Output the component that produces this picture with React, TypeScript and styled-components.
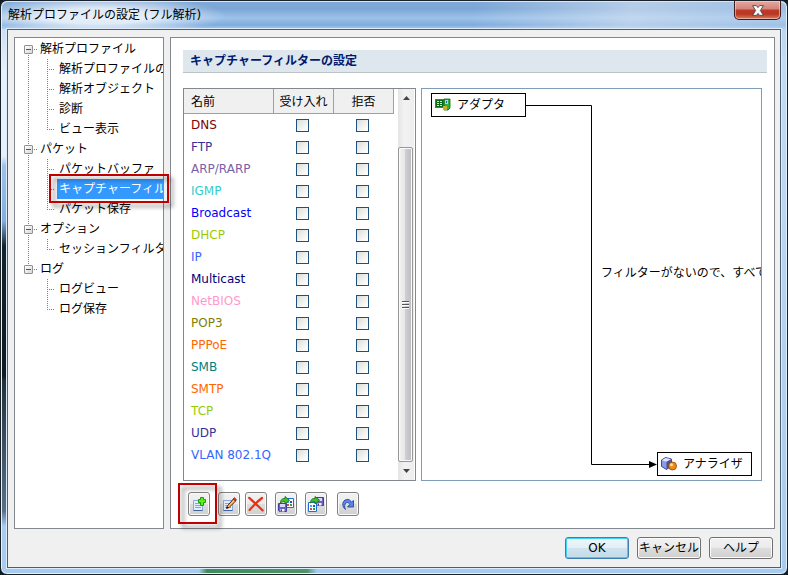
import React, { useState } from "react";
import styled, { createGlobalStyle, css } from "styled-components";

const GlobalStyle = createGlobalStyle`
  *, *::before, *::after { box-sizing: border-box; }
  body {
    margin: 0;
    background: #101c22;
    color: #000;
    font-family: "DejaVu Sans", "Noto Sans CJK JP", sans-serif;
    font-size: 12px;
    line-height: 20px;
  }
  button, input { font: inherit; color: inherit; margin: 0; padding: 0; }
  ul { list-style: none; margin: 0; padding: 0; }
`;

/* ---------- window frame ---------- */

const Window = styled.div`
  min-height: 100vh;
  display: flex;
  flex-direction: column;
  padding: 0 6px 6px;
  border: 1px solid #1a2128;
  border-radius: 7px;
  box-shadow: inset 0 0 0 1px #e4f1fc;
  background:
    linear-gradient(90deg, transparent 198px, #3f8a5c 206px, #4f9468 306px, transparent 316px) 0 100% / 100% 6px no-repeat,
    linear-gradient(180deg, #b9d3ee 0, #e6f1fb 70px, #e6f1fb 155px, #9cc2ea 165px, #83aede 220px, #14242c 245px, #0e1b1f 375px, #22323b 380px, #5a7088 510px, #a9cbed 525px) 0 0 / 6px 100% no-repeat,
    linear-gradient(180deg, #b7cfe9 0, #c3dcf5 60px, #b4d3f2 300px, #a7cbef 100%);
`;

const TitleBar = styled.header`
  display: flex;
  align-items: flex-start;
  justify-content: space-between;
  height: 28px;
  margin: 0 -5px;
  padding: 0 5px 0 2px;
  border-radius: 6px 6px 0 0;
  box-shadow: inset 0 1px 0 #d6e8f8;
  background:
    radial-gradient(ellipse 130px 20px at 95px 15px, rgba(255, 255, 255, 0.75) 40%, transparent 100%),
    linear-gradient(100deg, transparent 60%, rgba(218, 230, 243, 0.6) 80%, rgba(190, 214, 240, 0.5) 100%),
    linear-gradient(180deg, #7fa9d8 0, #7ba6d6 8px, #8bb3df 12px, #9cc2ea 17px, #7fabdc 24px, #a8cbef 28px);
`;

const Title = styled.h1`
  margin: 4px 0 0 4px;
  font-size: 12px;
  font-weight: 400;
  line-height: 20px;
  white-space: nowrap;
`;

const CloseButton = styled.button`
  display: grid;
  place-items: center;
  width: 47px;
  height: 19px;
  border: 1px solid #451b22;
  border-top: 0;
  border-radius: 0 0 5px 5px;
  box-shadow: inset 0 0 0 1px rgba(255, 220, 210, 0.55);
  background: linear-gradient(180deg, #e6a9a0 0, #d48379 8px, #bd3c28 9px, #b93622 13px, #d87e62 100%);
`;

const Client = styled.main`
  flex: 1;
  display: flex;
  flex-direction: column;
  border: 1px solid #4c5f6e;
  box-shadow: 0 0 0 1px #dcecfa;
  background: #f0f0f0;
`;

const Panels = styled.div`
  flex: 1;
  display: flex;
  gap: 6px;
  padding: 7px 5px 0 6px;
`;

const Footer = styled.footer`
  display: flex;
  justify-content: flex-end;
  gap: 8px;
  padding: 8px 7px;
`;

const DialogButton = styled.button<{ $primary?: boolean }>`
  width: 64px;
  height: 22px;
  line-height: 18px;
  white-space: nowrap;
  border: 1px solid #707070;
  border-radius: 3px;
  box-shadow: inset 0 0 0 1px #fbfbfb;
  background: linear-gradient(180deg, #f2f2f2 0, #ebebeb 48%, #dddddd 52%, #cfcfcf 100%);
  ${(p) =>
    p.$primary &&
    css`
      border-color: #3c7fb1;
      box-shadow: inset 0 0 0 1px #3fd0f8;
      background: linear-gradient(180deg, #eef6fa 0, #e2f0f7 48%, #cfe3ee 52%, #c3dbe8 100%);
    `}
`;

/* ---------- emphasis frame ---------- */

const Callout = styled.span<{ $inset: string }>`
  position: absolute;
  z-index: 2;
  inset: ${(p) => p.$inset};
  border: 2px solid #c00000;
  filter: drop-shadow(4px 4px 2px rgba(0, 0, 0, 0.45));
  pointer-events: none;
`;

/* ---------- tree ---------- */

const TreePanel = styled.nav`
  flex: none;
  width: 150px;
  padding-top: 1px;
  border: 1px solid #828790;
  background: #fff;
`;

const TreeRow = styled.div`
  position: relative;
  display: flex;
  height: 20px;
`;

const vDots = "repeating-linear-gradient(180deg, #808080 0 1px, transparent 1px 2px)";
const hDots = "repeating-linear-gradient(90deg, #808080 0 1px, transparent 1px 2px)";

const RootGuide = styled.span<{ $line: "first" | "through" | "last" | "none" }>`
  flex: none;
  display: flex;
  align-items: center;
  width: 23px;
  padding-left: 9px;
  background-repeat: no-repeat;
  ${(p) =>
    p.$line !== "none" &&
    css`
      background-image: ${vDots};
      background-size: 1px ${p.$line === "through" ? "100%" : "50%"};
      background-position: 13px ${p.$line === "first" ? "100%" : "0"};
    `}
`;

const ChildGuide = styled.span<{ $last: boolean }>`
  flex: none;
  width: 19px;
  background-repeat: no-repeat;
  background-image: ${vDots}, ${hDots};
  background-size: 1px ${(p) => (p.$last ? "50%" : "100%")}, 8px 1px;
  background-position: 9px 0, 9px 10px;
`;

const Dash = styled.span`
  width: 4px;
  height: 1px;
  margin-left: 1px;
  background: ${hDots};
`;

const Expander = styled.button`
  display: grid;
  place-items: center;
  width: 9px;
  height: 9px;
  border: 1px solid #919191;
  border-radius: 1px;
  background: linear-gradient(135deg, #fff, #d8d8d8);
  &::before {
    content: "";
    width: 5px;
    height: 1px;
    background: #3b55a0;
  }
`;

const TreeLabel = styled.a<{ $selected?: boolean }>`
  flex: 0 1 auto;
  min-width: 0;
  padding: 0 2px;
  overflow: hidden;
  white-space: nowrap;
  color: #000;
  text-decoration: none;
  ${(p) =>
    p.$selected &&
    css`
      color: #fff;
      background: #3399ff;
    `}
`;

/* ---------- settings panel ---------- */

const Settings = styled.section`
  flex: 1;
  min-width: 0;
  display: flex;
  flex-direction: column;
  padding: 12px 7px 12px 12px;
  border: 1px solid #828790;
  background: #fff;
`;

const SectionTitle = styled.h2`
  margin: 0 0 15px;
  padding: 0 7px;
  height: 23px;
  line-height: 22px;
  font-size: 12px;
  font-weight: 700;
  color: #001a6e;
  border-bottom: 1px solid #bcc3c7;
  background: #dde7ed;
`;

const Workspace = styled.div`
  flex: 1;
  display: flex;
  gap: 5px;
  padding-right: 5px;
`;

const ListBox = styled.div`
  flex: none;
  display: flex;
  justify-content: space-between;
  width: 233px;
  border: 1px solid #828790;
  padding-right: 1px;
`;

const FilterTable = styled.table`
  align-self: flex-start;
  width: 210px;
  table-layout: fixed;
  border-collapse: separate;
  border-spacing: 0;
`;

const HeadCell = styled.th<{ $wide?: boolean }>`
  width: ${(p) => (p.$wide ? "90px" : "60px")};
  height: 25px;
  padding: 2px 0 0 ${(p) => (p.$wide ? "7px" : "0")};
  font-weight: 400;
  white-space: nowrap;
  text-align: ${(p) => (p.$wide ? "left" : "center")};
  border-right: 1px solid #a0a0a0;
  border-bottom: 1px solid #a0a0a0;
  background: #f0f0f0;
`;

const NameCell = styled.th<{ $color: string }>`
  height: 22px;
  padding: 0 0 0 7px;
  font-weight: 400;
  text-align: left;
  white-space: nowrap;
  color: ${(p) => p.$color};
`;

const CheckCell = styled.td`
  height: 22px;
  padding: 0 3px 0 0;
  line-height: 0;
  text-align: center;
`;

const CheckBox = styled.input`
  appearance: none;
  width: 13px;
  height: 13px;
  border: 1px solid #1c5180;
  background: linear-gradient(135deg, #dcdcd7, #f8f8f6 70%, #fff);
  &:checked {
    background: #21a121;
    box-shadow: inset 0 0 0 2px #fff;
  }
`;

const ScrollBar = styled.div`
  display: flex;
  flex-direction: column;
  width: 16px;
  background: linear-gradient(90deg, #e4e4e4, #f2f2f2 40%, #eeeeee);
`;

const ScrollArrow = styled.button`
  display: grid;
  place-items: center;
  height: 18px;
  border: 0;
  background: none;
`;

const ScrollTrack = styled.div`
  flex: 1;
  display: flex;
  flex-direction: column;
  padding-top: 40px;
`;

const ScrollThumb = styled.div`
  flex: 1;
  display: grid;
  place-items: center;
  margin-right: 1px;
  border: 1px solid #979797;
  border-radius: 2px;
  box-shadow: inset 0 0 0 1px #fafafa;
  background: linear-gradient(90deg, #f4f4f4, #e6e6e8 45%, #cfcfd3 50%, #bcbcc0);
`;

/* ---------- diagram ---------- */

const Canvas = styled.div`
  position: relative;
  flex: 1;
  min-width: 0;
  overflow: hidden;
  border: 1px solid #7f9db9;
`;

const Wires = styled.svg`
  position: absolute;
  left: 0;
  top: 0;
`;

const Node = styled.div<{ $x: number; $y: number }>`
  position: absolute;
  left: ${(p) => p.$x}px;
  top: ${(p) => p.$y}px;
  display: flex;
  align-items: center;
  gap: 6px;
  width: 95px;
  height: 24px;
  padding-left: 3px;
  border: 1px solid #000;
  background: #fff;
  white-space: nowrap;
`;

const CanvasNote = styled.p`
  position: absolute;
  left: 179px;
  top: 174px;
  margin: 0;
  white-space: nowrap;
`;

/* ---------- toolbar ---------- */

const Toolbar = styled.div`
  display: flex;
  gap: 8px;
  margin-top: 11px;
  padding-left: 5px;
`;

const ToolGroup = styled.div<{ $gap: number }>`
  display: flex;
  gap: ${(p) => p.$gap}px;
`;

const ToolButton = styled.button`
  position: relative;
  display: grid;
  place-items: center;
  width: 22px;
  height: 24px;
  border: 1px solid #808080;
  border-radius: 3px;
  box-shadow: inset 0 0 0 1px #fafafa;
  background: linear-gradient(180deg, #f2f2f2 0, #ebebeb 48%, #dddddd 52%, #d0d0d0 100%);
`;

/* ---------- icons ---------- */

const Icon = ({ children }: { children: React.ReactNode }) => (
  <svg width="16" height="16" viewBox="0 0 16 16" aria-hidden="true">
    {children}
  </svg>
);

const Sheet = () => (
  <>
    <path d="M2.5 4.5h9v10h-9z" fill="#e3efff" stroke="#8aa9dc" />
    <path d="M2.5 14.5h9" stroke="#3e62a8" />
    <path d="M4 7.5h6M4 9.5h6M4 11.5h6" stroke="#7fa3e4" />
  </>
);

const AddIcon = () => (
  <Icon>
    <Sheet />
    <path d="M9.5 1.5h3v2h2v3h-2v3h-3v-3h-2v-3h2z" fill="#5cf016" stroke="#1c9a10" />
  </Icon>
);

const EditIcon = () => (
  <Icon>
    <Sheet />
    <path d="M6.2 10.2 12.8 2.6 15 4.6 8 11.6 5.6 12.4z" fill="#ffc26a" stroke="#4b1b0c" />
    <path d="M12 3.2 13.4 1.6 15.4 3.4 14.2 5z" fill="#e23a22" stroke="#7c1408" strokeWidth=".6" />
    <path d="M5.4 12.6 6.2 10.4 7.6 11.8z" fill="#111" />
  </Icon>
);

const DeleteIcon = () => (
  <Icon>
    <path d="M1.2 1.8C5 5 10 10 14.6 14.4M14 2C10 5 5 10 1.6 14" fill="none" stroke="#e63312" strokeWidth="2.2" strokeLinecap="round" />
  </Icon>
);

const Disk = ({ x, y }: { x: number; y: number }) => (
  <g transform={`translate(${x} ${y})`}>
    <path d="M.5.5h8v8h-7l-1-1z" fill="#6a63c4" stroke="#453c9c" />
    <path d="M2 1h5v3H2z" fill="#d9d7f4" />
    <path d="M2.5 6h4v2.5h-4z" fill="#f4f4ff" />
    <path d="M3 6.5h1v2H3z" fill="#3a348c" />
  </g>
);

const Grid = ({ x, y }: { x: number; y: number }) => (
  <g transform={`translate(${x} ${y})`}>
    <path d="M.5.5h8v9h-8z" fill="#fff" stroke="#1f6fd8" />
    <path d="M2 3h2v2H2z" fill="#42a5f5" />
    <path d="M5 3h2v2H5z" fill="#1e4fc0" />
    <path d="M2 6h2v2H2z" fill="#e6482a" />
    <path d="M5 6h2v2H5z" fill="#28a53a" />
  </g>
);

const TransferArrow = () => (
  <path d="M2.5 7C2.500 3.500 4.500 2.300 7 2.500V.5l4.500 3.800L7 8V5.700C5 5.500 3.800 6 2.500 7z" fill="#47c02c" stroke="#17701a" strokeWidth=".9" />
);

const ImportIcon = () => (
  <Icon>
    <Grid x={7} y={2} />
    <Disk x={0} y={7} />
    <TransferArrow />
  </Icon>
);

const ExportIcon = () => (
  <Icon>
    <Disk x={7} y={1} />
    <Grid x={0} y={6} />
    <TransferArrow />
  </Icon>
);

const ResetIcon = () => (
  <Icon>
    <path d="M5.500 13.500C1.500 10.500 2 4.500 6.500 3.500 9 3 10.600 4.200 11.400 6.200L13.500 4.500V11H7.500L9.600 8.600C9 6.600 7.600 6 6.200 6.800 4.400 8 4.200 11 5.500 13.500z" fill="#5b86e8" stroke="#27469f" strokeWidth=".9" />
  </Icon>
);

const AdapterIcon = () => (
  <Icon>
    <path d="M0 2h12v9H0z" fill="#1f9a2a" />
    <path d="M1 3h7v7H1z" fill="#0c6b18" />
    <path d="M2 4h2v1H2zM5 4h2v1H5zM2 6h2v1H2zM5 6h2v1H5zM2 8h2v1H2zM5 8h2v1H5z" fill="#c8f7b4" />
    <path d="M9 2h6v9l-2 2H9z" fill="#2db53a" stroke="#0b5e14" strokeWidth=".8" />
    <path d="M10 3h3v4h-3z" fill="#a9d4ff" />
    <path d="M11 4h1v2h-1z" fill="#2a62b8" />
    <path d="M8 9h4v4H8z" fill="#f4d935" />
    <path d="M9 9v4M11 9v4" stroke="#7a6a00" strokeWidth=".7" />
  </Icon>
);

const AnalyzerIcon = () => (
  <Icon>
    <path d="M.5 4 4.500 1.500 10.500 3V10L5.500 13.500.5 10.500z" fill="#8c9ae0" stroke="#323c88" strokeWidth=".9" />
    <path d="M.9 4.200 4.600 2 10 3.200 5.600 5.800z" fill="#dfe5ff" />
    <path d="M5.500 5.800 10.500 3.200V10L5.500 13.400z" fill="#4450a8" />
    <circle cx="11.500" cy="10" r="4" fill="#f08a12" stroke="#8d4406" strokeWidth=".8" />
    <circle cx="10.500" cy="8.800" r="1.500" fill="#ffe2a8" />
  </Icon>
);

const CloseGlyph = () => (
  <svg width="12" height="11" viewBox="0 0 12 11" aria-hidden="true">
    <path d="M.6 .6h3.800L6 2.600 7.600 .6h3.800L8.400 5.500l3 4.900H7.600L6 8.400l-1.600 2H.6l3-4.900z" fill="#fafafa" stroke="#4a4550" strokeWidth=".9" />
  </svg>
);

const Arrow = ({ down }: { down?: boolean }) => (
  <svg width="7" height="4" viewBox="0 0 7 4" aria-hidden="true">
    <path d={down ? "M0 0h7L3.500 4z" : "M0 4h7L3.500 0z"} fill="#444" />
  </svg>
);

const Grip = () => (
  <svg width="8" height="8" viewBox="0 0 8 8" aria-hidden="true">
    <path d="M0 .5h7M0 3.500h7M0 6.500h7" stroke="#555" />
    <path d="M0 1.500h7M0 4.500h7M0 7.500h7" stroke="#fff" />
  </svg>
);

/* ---------- data ---------- */

const tree = [
  { label: "解析プロファイル", children: ["解析プロファイルの設定", "解析オブジェクト", "診断", "ビュー表示"] },
  { label: "パケット", children: ["パケットバッファ", "キャプチャーフィルター", "パケット保存"] },
  { label: "オプション", children: ["セッションフィルター"] },
  { label: "ログ", children: ["ログビュー", "ログ保存"] },
];

const selectedItem = "キャプチャーフィルター";

const filters: [string, string][] = [
  ["DNS", "#800000"],
  ["FTP", "#333399"],
  ["ARP/RARP", "#7a5fa8"],
  ["IGMP", "#33cccc"],
  ["Broadcast", "#0000ff"],
  ["DHCP", "#99cc00"],
  ["IP", "#3366ff"],
  ["Multicast", "#000080"],
  ["NetBIOS", "#ff99cc"],
  ["POP3", "#808000"],
  ["PPPoE", "#ff6600"],
  ["SMB", "#008080"],
  ["SMTP", "#ff6600"],
  ["TCP", "#99cc00"],
  ["UDP", "#333399"],
  ["VLAN 802.1Q", "#3366ff"],
];

function Tree() {
  return (
    <TreePanel aria-label="設定項目">
      <ul>
        {tree.map((group, g) => {
          const lastGroup = g === tree.length - 1;
          return (
            <li key={group.label}>
              <TreeRow>
                <RootGuide $line={g === 0 ? "first" : lastGroup ? "last" : "through"}>
                  <Expander aria-label={group.label} aria-expanded />
                  <Dash />
                </RootGuide>
                <TreeLabel href="#">{group.label}</TreeLabel>
              </TreeRow>
              <ul>
                {group.children.map((item, i) => (
                  <li key={item}>
                    <TreeRow>
                      <RootGuide $line={lastGroup ? "none" : "through"} />
                      <ChildGuide $last={i === group.children.length - 1} />
                      <TreeLabel href="#" $selected={item === selectedItem}>
                        {item}
                      </TreeLabel>
                      {item === selectedItem && <Callout $inset="-5px -6px -4px 34px" />}
                    </TreeRow>
                  </li>
                ))}
              </ul>
            </li>
          );
        })}
      </ul>
    </TreePanel>
  );
}

function FilterList() {
  const [checked, setChecked] = useState<Record<string, boolean>>({});
  const toggle = (key: string) => setChecked((c) => ({ ...c, [key]: !c[key] }));
  return (
    <ListBox>
      <FilterTable>
        <thead>
          <tr>
            <HeadCell scope="col" $wide>名前</HeadCell>
            <HeadCell scope="col">受け入れ</HeadCell>
            <HeadCell scope="col">拒否</HeadCell>
          </tr>
        </thead>
        <tbody>
          {filters.map(([name, color]) => (
            <tr key={name}>
              <NameCell scope="row" $color={color}>{name}</NameCell>
              {["受け入れ", "拒否"].map((action) => {
                const key = `${name} ${action}`;
                return (
                  <CheckCell key={key}>
                    <CheckBox type="checkbox" aria-label={key} checked={!!checked[key]} onChange={() => toggle(key)} />
                  </CheckCell>
                );
              })}
            </tr>
          ))}
        </tbody>
      </FilterTable>
      <ScrollBar>
        <ScrollArrow aria-label="上へ"><Arrow /></ScrollArrow>
        <ScrollTrack>
          <ScrollThumb><Grip /></ScrollThumb>
        </ScrollTrack>
        <ScrollArrow aria-label="下へ"><Arrow down /></ScrollArrow>
      </ScrollBar>
    </ListBox>
  );
}

function Diagram() {
  return (
    <Canvas>
      <Wires width="336" height="391" viewBox="0 0 336 391" aria-hidden="true">
        <path d="M103 16.500H169.500V375.500H228" fill="none" stroke="#000" />
        <path d="M227 372v7l8-3.500z" />
      </Wires>
      <Node $x={9} $y={4}><AdapterIcon />アダプタ</Node>
      <CanvasNote>フィルターがないので、すべてのパケットをキャプチャーします</CanvasNote>
      <Node $x={235} $y={363}><AnalyzerIcon />アナライザ</Node>
    </Canvas>
  );
}

export default function App() {
  return (
    <>
      <GlobalStyle />
      <Window>
        <TitleBar>
          <Title>解析プロファイルの設定 (フル解析)</Title>
          <CloseButton aria-label="閉じる"><CloseGlyph /></CloseButton>
        </TitleBar>
        <Client>
          <Panels>
            <Tree />
            <Settings>
              <SectionTitle>キャプチャーフィルターの設定</SectionTitle>
              <Workspace>
                <FilterList />
                <Diagram />
              </Workspace>
              <Toolbar>
                <ToolButton aria-label="追加"><AddIcon /><Callout $inset="-10px -8px -9px -11px" /></ToolButton>
                <ToolGroup $gap={5}>
                  <ToolButton aria-label="編集"><EditIcon /></ToolButton>
                  <ToolButton aria-label="削除"><DeleteIcon /></ToolButton>
                </ToolGroup>
                <ToolButton aria-label="インポート"><ImportIcon /></ToolButton>
                <ToolGroup $gap={10}>
                  <ToolButton aria-label="エクスポート"><ExportIcon /></ToolButton>
                  <ToolButton aria-label="リセット"><ResetIcon /></ToolButton>
                </ToolGroup>
              </Toolbar>
            </Settings>
          </Panels>
          <Footer>
            <DialogButton $primary>OK</DialogButton>
            <DialogButton>キャンセル</DialogButton>
            <DialogButton>ヘルプ</DialogButton>
          </Footer>
        </Client>
      </Window>
    </>
  );
}
